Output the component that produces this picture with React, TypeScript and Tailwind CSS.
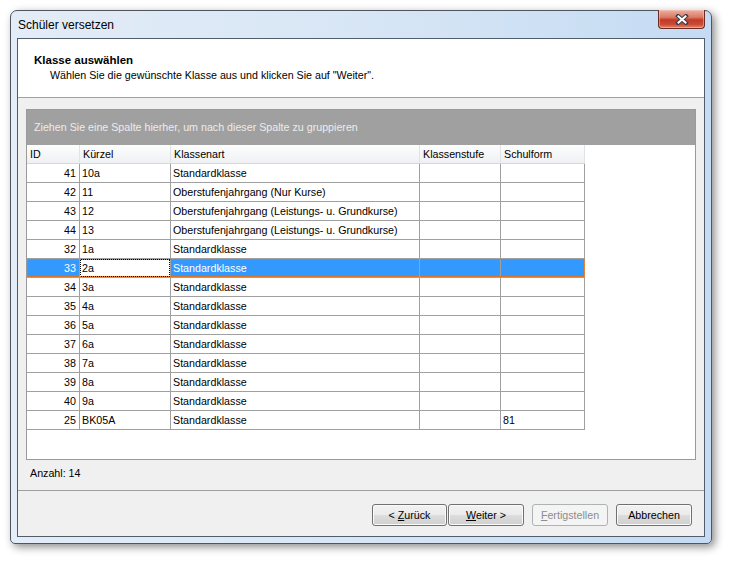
import { ReactNode } from 'react';

type Klasse = {
  id: number;
  kuerzel: string;
  art: string;
  stufe: string;
  schulform: string;
};

const klassen: Klasse[] = [
  { id: 41, kuerzel: '10a', art: 'Standardklasse', stufe: '', schulform: '' },
  { id: 42, kuerzel: '11', art: 'Oberstufenjahrgang (Nur Kurse)', stufe: '', schulform: '' },
  { id: 43, kuerzel: '12', art: 'Oberstufenjahrgang (Leistungs- u. Grundkurse)', stufe: '', schulform: '' },
  { id: 44, kuerzel: '13', art: 'Oberstufenjahrgang (Leistungs- u. Grundkurse)', stufe: '', schulform: '' },
  { id: 32, kuerzel: '1a', art: 'Standardklasse', stufe: '', schulform: '' },
  { id: 33, kuerzel: '2a', art: 'Standardklasse', stufe: '', schulform: '' },
  { id: 34, kuerzel: '3a', art: 'Standardklasse', stufe: '', schulform: '' },
  { id: 35, kuerzel: '4a', art: 'Standardklasse', stufe: '', schulform: '' },
  { id: 36, kuerzel: '5a', art: 'Standardklasse', stufe: '', schulform: '' },
  { id: 37, kuerzel: '6a', art: 'Standardklasse', stufe: '', schulform: '' },
  { id: 38, kuerzel: '7a', art: 'Standardklasse', stufe: '', schulform: '' },
  { id: 39, kuerzel: '8a', art: 'Standardklasse', stufe: '', schulform: '' },
  { id: 40, kuerzel: '9a', art: 'Standardklasse', stufe: '', schulform: '' },
  { id: 25, kuerzel: 'BK05A', art: 'Standardklasse', stufe: '', schulform: '81' },
];

const SELECTED_ID = 33;

const CloseGlyph = () => (
  <svg width="14" height="11" viewBox="0 0 14 11">
    <path d="M3 2 L11 9 M11 2 L3 9" stroke="#3d3f4a" strokeWidth="4" strokeLinecap="square" />
    <path d="M3.5 2.5 L10.5 8.5 M10.5 2.5 L3.5 8.5" stroke="#ffffff" strokeWidth="2" strokeLinecap="square" />
  </svg>
);

const HeaderCell = ({ w, children }: { w: string; children: ReactNode }) => (
  <div
    className={`${w} h-full flex items-center pl-[3px] border-r border-[#e2e3e6] bg-[linear-gradient(#fdfdfd,#f6f7f8_50%,#eef0f3)]`}
  >
    {children}
  </div>
);

const Row = ({ k }: { k: Klasse }) => {
  const selected = k.id === SELECTED_ID;
  const cell = `h-full flex items-center border-r border-[#a0a0a0] ${
    selected ? 'bg-[#3399ff] text-white' : ''
  }`;
  return (
    <div className="relative flex h-[19px] w-[558px] border-b border-[#a0a0a0]">
      <div className={`${cell} w-[53px] justify-end pr-[3px]`}>{k.id}</div>
      <div
        className={`h-full flex items-center border-r border-[#a0a0a0] w-[91px] pl-[2px] relative ${
          selected ? 'bg-white text-black' : ''
        }`}
      >
        {k.kuerzel}
        {selected ? (
          <span className="absolute inset-0 border border-dotted border-black pointer-events-none" />
        ) : null}
      </div>
      <div className={`${cell} w-[249px] pl-[2px] whitespace-nowrap`}>{k.art}</div>
      <div className={`${cell} w-[81px] pl-[2px]`}>{k.stufe}</div>
      <div className={`${cell} w-[84px] pl-[2px]`}>{k.schulform}</div>
      {selected ? (
        <span className="absolute inset-0 border border-dotted border-[#e07a2a] pointer-events-none" />
      ) : null}
    </div>
  );
};

const WizardButton = ({
  children,
  disabled,
  w,
}: {
  children: ReactNode;
  disabled?: boolean;
  w: string;
}) => (
  <button
    className={`${w} h-[22px] rounded-[3px] border flex items-center justify-center ${
      disabled
        ? 'border-[#adb2b5] bg-[#f4f4f4] text-[#8d8d8d]'
        : 'border-[#707070] text-black bg-[linear-gradient(#f2f2f2,#ebebeb_50%,#dddddd_51%,#cfcfcf)] shadow-[inset_0_0_0_1px_#fbfbfb]'
    }`}
  >
    {children}
  </button>
);

const App = () => {
  return (
    <div
      className="w-[730px] h-[562px] bg-white pt-[10px] pl-[10px] text-[10.7px] text-black"
      style={{ fontFamily: '"Liberation Sans", Arial, sans-serif' }}
    >
      <div className="w-[702px] h-[534px] flex flex-col border border-[#4f5660] rounded-t-[7px] rounded-b-[5px] bg-[linear-gradient(90deg,#e3ecf7,#d6e5f5_55%,#c4dbf3)] shadow-[3px_3px_9px_rgba(0,0,0,0.45)]">
        {/* title bar */}
        <div className="h-[27px] flex justify-between pl-[7px] pr-[6px]">
          <div className="text-[12px] leading-[27px] pt-[1px]">Schüler versetzen</div>
          <div className="w-[47px] h-[19px] -mt-[1px] rounded-b-[4px] border border-[#6b2a22] border-t-0 flex items-center justify-center bg-[linear-gradient(#eab1a4,#dc7a66_40%,#c13b27_55%,#cb4a33_80%,#e08a70)] shadow-[inset_0_0_0_1px_rgba(255,210,200,0.45)]">
            <CloseGlyph />
          </div>
        </div>

        {/* client area */}
        <div className="mx-[6px] h-[499px] flex flex-col border border-[#505d6d] bg-[#f0f0f0]">
          <div className="h-[59px] bg-white border-b border-[#a0a0a0] pt-[14px]">
            <div className="pl-[16px] font-bold text-[11.5px] leading-[14px]">Klasse auswählen</div>
            <div className="pl-[32px] leading-[14px] mt-[1px]">
              Wählen Sie die gewünschte Klasse aus und klicken Sie auf "Weiter".
            </div>
          </div>

          <div className="px-[8px] pt-[11px]">
            <div className="h-[351px] border border-[#9a9a9a] bg-white flex flex-col">
              <div className="h-[35px] bg-[#a0a0a0] flex items-center pl-[7px] text-[#ececec]">
                Ziehen Sie eine Spalte hierher, um nach dieser Spalte zu gruppieren
              </div>
              <div className="flex h-[19px] w-[558px] border-b border-[#d6d7da]">
                <HeaderCell w="w-[53px]">ID</HeaderCell>
                <HeaderCell w="w-[91px]">Kürzel</HeaderCell>
                <HeaderCell w="w-[249px]">Klassenart</HeaderCell>
                <HeaderCell w="w-[81px]">Klassenstufe</HeaderCell>
                <HeaderCell w="w-[84px]">Schulform</HeaderCell>
              </div>
              {klassen.map((k) => (
                <Row key={k.id} k={k} />
              ))}
            </div>
            <div className="mt-[6px] pl-[4px] leading-[14px]">Anzahl: 14</div>
          </div>

          <div className="flex-1" />

          <div className="h-[46px] border-t border-[#a0a0a0] flex justify-end items-start pt-[13px] pr-[12px]">
            <WizardButton w="w-[75px]">
              &lt; <span className="underline ml-[3px]">Z</span>urück
            </WizardButton>
            <div className="w-[1px]" />
            <WizardButton w="w-[76px]">
              <span className="underline">W</span>eiter &gt;
            </WizardButton>
            <div className="w-[8px]" />
            <WizardButton w="w-[76px]" disabled>
              <span className="underline">F</span>ertigstellen
            </WizardButton>
            <div className="w-[8px]" />
            <WizardButton w="w-[76px]">Abbrechen</WizardButton>
          </div>
        </div>
      </div>
    </div>
  );
};

export default App;
